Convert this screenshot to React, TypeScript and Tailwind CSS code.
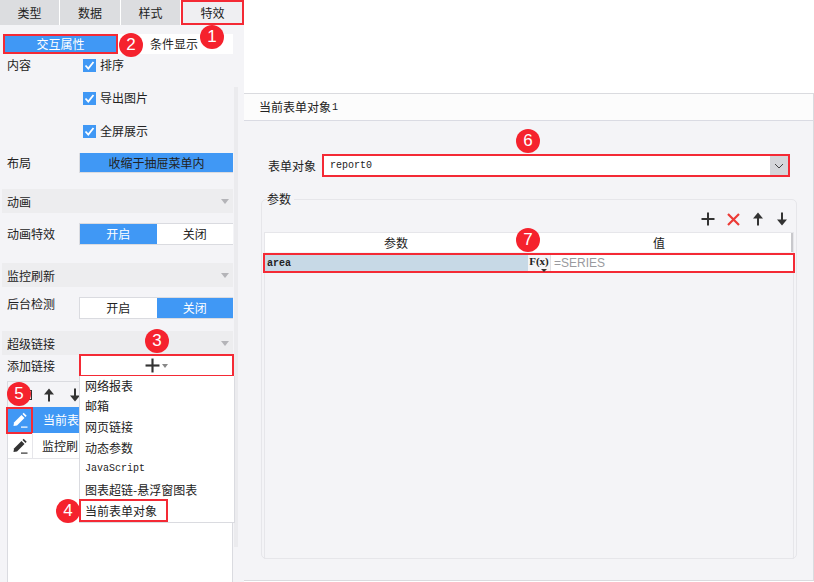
import React from "react";

const cjk = { fontFamily: '"Noto Sans CJK SC", "Liberation Sans", sans-serif' };
const mono = { fontFamily: '"Liberation Mono", monospace' };

function Badge({ n, x, y }: { n: number; x: number; y: number }) {
  return (
    <div
      className="absolute z-30 flex h-[24px] w-[24px] items-center justify-center rounded-full bg-[#f5222d] text-[17px] text-white"
      style={{ left: x - 12, top: y - 12, fontFamily: '"Liberation Sans", sans-serif' }}
    >
      {n}
    </div>
  );
}

function Pencil({ color }: { color: string }) {
  return (
    <svg width="16" height="16" viewBox="0 0 16 16" fill={color}>
      <path d="M2 10.5 L9.5 3 L12.5 6 L5 13.5 L1.5 14 Z" />
      <path d="M10.5 2 L11.7 0.8 L14.7 3.8 L13.5 5 Z" />
      <rect x="9" y="14.5" width="6.5" height="1.2" />
    </svg>
  );
}

function Plus({ size = 14 }: { size?: number }) {
  return (
    <svg width={size} height={size} viewBox="0 0 14 14" fill="#333">
      <rect x="6" y="0.5" width="2" height="13" />
      <rect x="0.5" y="6" width="13" height="2" />
    </svg>
  );
}

function Arrow({ down }: { down?: boolean }) {
  return (
    <svg width="12" height="14" viewBox="0 0 12 14" fill="#333" style={down ? { transform: "rotate(180deg)" } : undefined}>
      <path d="M6 0.5 L11 6.5 L7 6.5 L7 13.5 L5 13.5 L5 6.5 L1 6.5 Z" />
    </svg>
  );
}

function Check({ label }: { label: string }) {
  return (
    <div className="flex h-[20px] items-center">
      <span className="flex h-[13px] w-[13px] items-center justify-center bg-[#4098f5]">
        <svg width="11" height="11" viewBox="0 0 11 11" fill="none" stroke="#fff" strokeWidth="1.8">
          <path d="M1.5 5.5 L4.3 8.5 L9.5 2" />
        </svg>
      </span>
      <span className="ml-[4px] text-[12px] text-[#222]">{label}</span>
    </div>
  );
}

function Header({ title, className }: { title: string; className: string }) {
  return (
    <div className={`ml-[2px] flex h-[24px] w-[231px] items-center justify-between bg-[#ededef] pl-[5px] pr-[4px] pt-[1px] text-[12px] text-[#222] ${className}`}>
      <span>{title}</span>
      <span className="h-0 w-0 border-x-[4px] border-t-[5px] border-x-transparent border-t-[#b4b4b8]" />
    </div>
  );
}

function Toggle({ on }: { on: "left" | "right" }) {
  const active = "flex flex-1 items-center justify-center bg-[#4098f5] text-white";
  const idle = "flex flex-1 items-center justify-center bg-white text-[#222]";
  return (
    <div className="flex h-[22px] w-[154px] border border-r-0 border-[#dadbe0] text-[12px]">
      <span className={on === "left" ? active : idle}>开启</span>
      <span className={on === "right" ? active : idle}>关闭</span>
    </div>
  );
}

const menu = ["网络报表", "邮箱", "网页链接", "动态参数", "JavaScript", "图表超链-悬浮窗图表", "当前表单对象"];

export default function App() {
  return (
    <div className="relative flex h-[582px] w-[814px] overflow-hidden bg-white" style={cjk}>
      <aside className="relative flex h-full w-[244px] shrink-0 flex-col bg-[#f4f4f7]">
        <div className="flex h-[25px] gap-[1px] bg-white text-[12px] text-[#222]">
          <div className="flex w-[59px] items-center justify-center bg-[#dcdde0]">类型</div>
          <div className="flex w-[60px] items-center justify-center bg-[#dcdde0]">数据</div>
          <div className="flex w-[59px] items-center justify-center bg-[#dcdde0]">样式</div>
          <div className="flex flex-1 items-center justify-center bg-[#efeff2] outline-2 -outline-offset-2 outline-[#f42a35]">特效</div>
        </div>

        <div className="ml-[3px] mt-[9px] flex h-[20px] w-[230px] text-[12px]">
          <div className="flex w-[115px] items-center justify-center bg-[#4098f5] text-white outline-2 -outline-offset-2 outline-[#f42a35]">交互属性</div>
          <div className="flex flex-1 items-center justify-center bg-white pr-[3px] text-[#222]">条件显示</div>
        </div>

        <div className="mt-[1px] flex">
          <div className="w-[83px] pl-[7px] pt-[1px] text-[12px] leading-[18px] text-[#222]">内容</div>
          <div className="flex flex-col gap-[13px]">
            <Check label="排序" />
            <Check label="导出图片" />
            <Check label="全屏展示" />
          </div>
        </div>

        <div className="mt-[12px] flex h-[20px] items-center text-[12px] text-[#222]">
          <span className="w-[79px] pl-[7px]">布局</span>
          <span className="flex h-[20px] w-[154px] items-center justify-center border-b border-l border-[#dadbe0] bg-[#4098f5] text-[#222]">收缩于抽屉菜单内</span>
        </div>

        <Header title="动画" className="mt-[16px]" />
        <div className="mt-[10px] flex items-center text-[12px] text-[#222]">
          <span className="w-[79px] pl-[7px]">动画特效</span>
          <Toggle on="left" />
        </div>

        <Header title="监控刷新" className="mt-[18px]" />
        <div className="mt-[10px] flex items-start text-[12px] text-[#222]">
          <span className="w-[79px] pl-[7px] leading-[14px]">后台检测</span>
          <Toggle on="right" />
        </div>

        <Header title="超级链接" className="mt-[12px]" />
        <div className="flex h-[21px] items-center text-[12px] text-[#222]">
          <span className="w-[80px] pl-[7px]">添加链接</span>
          <span className="flex h-[21px] w-[153px] items-center justify-center gap-[2px] bg-white outline-2 -outline-offset-1 outline-[#f42a35]">
            <Plus size={15} />
            <span className="h-0 w-0 border-x-[3px] border-t-[4px] border-x-transparent border-t-[#888]" />
          </span>
        </div>

        <div className="ml-[7px] mt-[5px] flex w-[226px] flex-1 flex-col border border-b-0 border-[#dadbe0] bg-white text-[12px] text-[#222]">
          <div className="flex h-[25px] items-center bg-[#f4f4f7] pl-[16px]">
            <span className="h-[10px] w-[8px] border border-[#333]" />
            <span className="ml-[11px]"><Arrow /></span>
            <span className="ml-[14px]"><Arrow down /></span>
          </div>
          <div className="flex h-[26px] items-center bg-[#4098f5] text-white">
            <span className="flex h-[23px] w-[23px] items-center justify-center outline-2 outline-[#f42a35]">
              <Pencil color="#fff" />
            </span>
            <span className="ml-[12px] whitespace-nowrap">当前表</span>
          </div>
          <div className="flex h-[26px] items-center border-b border-[#e6e6ea]">
            <span className="flex h-full w-[25px] items-center justify-center border-r border-[#e6e6ea]">
              <Pencil color="#333" />
            </span>
            <span className="ml-[9px] whitespace-nowrap">监控刷</span>
          </div>
        </div>

        <div className="absolute left-[234px] top-[87px] h-[460px] w-[4px] bg-[#ebebee]" />

        <div className="absolute left-[79px] top-[376px] z-10 flex w-[156px] flex-col border-x border-b border-[#dadbe0] bg-white pb-[1px] text-[12px] text-[#222]">
          {menu.map((m, i) => (
            <div
              key={m}
              className={`flex items-center pl-[5px] ${i === 0 ? "h-[19px]" : "h-[21px]"} ${i === 4 ? "text-[10px]" : ""} ${i === 6 ? "w-[87px] outline-2 -outline-offset-1 outline-[#f42a35]" : ""}`}
              style={i === 4 ? mono : undefined}
            >
              {m}
            </div>
          ))}
        </div>
      </aside>

      <main className="flex-1 pt-[93px]">
        <div className="flex h-[488px] flex-col border border-l-0 border-[#dadbdf] bg-[#f4f4f7]">
          <div className="flex h-[27px] shrink-0 items-center gap-[1px] border-b border-[#dadbe3] bg-[#fcfcfc] pl-[15px] text-[12px] text-[#222]">
            <span>当前表单对象</span>
            <span className="text-[10px]" style={mono}>1</span>
          </div>

          <div className="ml-[24px] mt-[33px] flex h-[23px] items-center text-[12px] text-[#222]">
            <span className="w-[54px]">表单对象</span>
            <div className="flex h-[23px] w-[468px] items-center justify-between border-2 border-[#f42a35] bg-white">
              <span className="pl-[6px] text-[10px] text-[#222]" style={mono}>report0</span>
              <span className="flex h-full w-[18px] items-center justify-center bg-[#d5d6da]">
                <svg width="10" height="6" viewBox="0 0 10 6" fill="none" stroke="#444">
                  <path d="M1 1 L5 5 L9 1" />
                </svg>
              </span>
            </div>
          </div>

          <fieldset className="ml-[17px] mt-[14px] h-[368px] w-[536px] rounded-[5px] border border-[#e6e6ea] pl-[2px] pr-[2px]">
            <legend className="ml-[3px] pr-[3px] text-[12px] leading-[16px] text-[#222]">参数</legend>
            <div className="flex h-[20px] items-center justify-end gap-[12px] pr-[6px] pt-[4px]">
              <Plus />
              <svg width="13" height="13" viewBox="0 0 13 13" stroke="#ec3b36" strokeWidth="2.2">
                <path d="M1 1 L12 12 M12 1 L1 12" />
              </svg>
              <Arrow />
              <Arrow down />
            </div>
            <div className="mt-[5px] h-[327px] border border-[#e6e6ea]">
              <div className="flex h-[19px] bg-white text-[12px] text-[#222]">
                <span className="flex w-[262px] items-center justify-center">参数</span>
                <span className="flex flex-1 items-center justify-center border-r-2 border-[#c8c8cc]">值</span>
              </div>
              <div className="-mx-[2px] mt-[1px] flex h-[20px] bg-white outline-2 -outline-offset-2 outline-[#f42a35]">
                <span className="flex w-[265px] items-center bg-[#c7d9e6] pl-[4px] text-[10px] font-bold text-[#222]" style={mono}>area</span>
                <span className="relative my-[2px] flex w-[23px] justify-center border-r border-[#e0e0e4] bg-[#f4f4f6] text-[11px] font-bold leading-[13px] text-[#222]" style={{ fontFamily: '"Liberation Serif", serif' }}>
                  F(x)
                  <span className="absolute bottom-[-1px] right-[3px] h-0 w-0 border-x-[3px] border-t-[3px] border-x-transparent border-t-[#333]" />
                </span>
                <span className="flex items-center pl-[3px] text-[12px] text-[#9a9a9e]" style={{ fontFamily: '"Liberation Sans", sans-serif' }}>=SERIES</span>
              </div>
            </div>
          </fieldset>
        </div>
      </main>

      <Badge n={1} x={212} y={37} />
      <Badge n={2} x={131} y={45} />
      <Badge n={3} x={157} y={341} />
      <Badge n={4} x={68} y={511} />
      <Badge n={5} x={19} y={394} />
      <Badge n={6} x={528} y={141} />
      <Badge n={7} x={528} y={240} />
    </div>
  );
}
